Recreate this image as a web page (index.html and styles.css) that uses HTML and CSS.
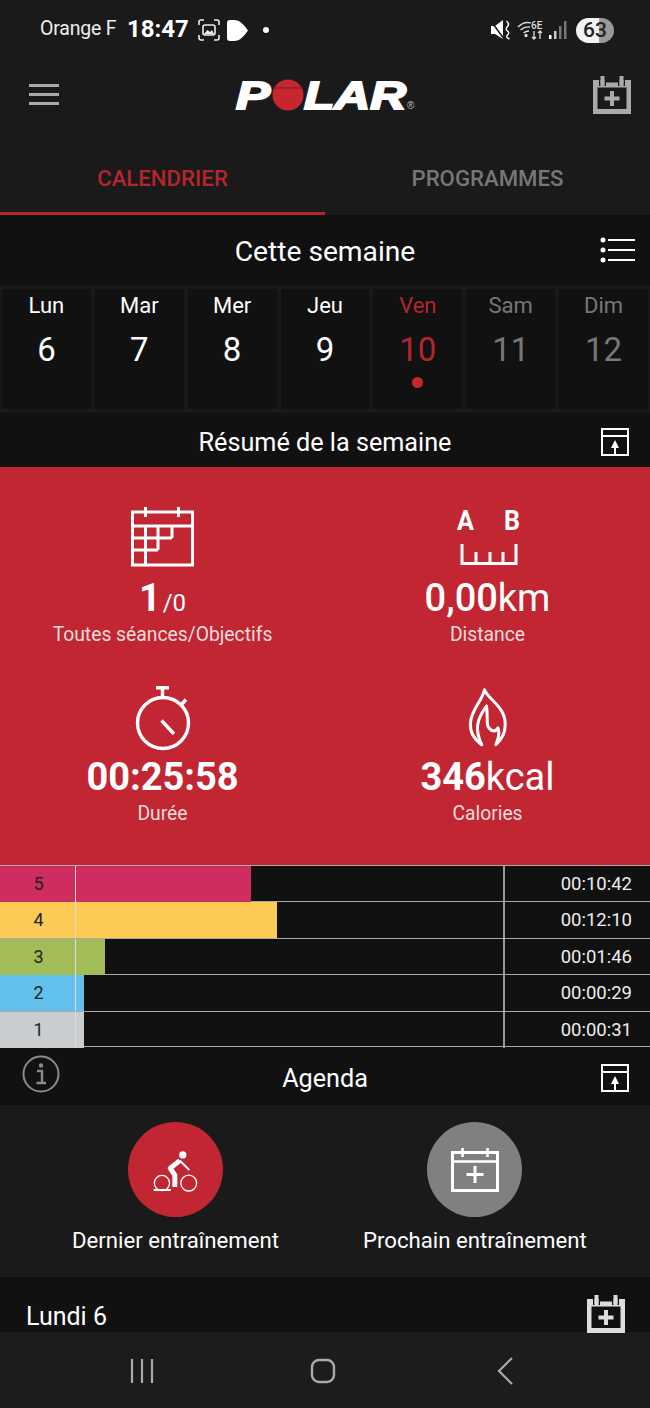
FILE: index.html
```html
<!DOCTYPE html>
<html lang="fr">
<head>
    <meta charset="UTF-8">
    <title>Polar - Calendrier</title>
    <link rel="stylesheet" href="styles.css">
</head>
<body>
<svg class="defs" width="0" height="0">
    <symbol id="cal-plus" viewBox="0 0 38 38">
        <path fill-rule="evenodd" fill="currentColor" d="M0 4H38V38H0Z M4.500 11.500V33H33.500V11.500Z M6 4V10H7.500V4Z M11.500 4V10H13V4Z M13 4V6.500H25V4Z M25 4V10H26.500V4Z M30.500 4V10H32V4Z"/>
        <path d="M9.500 0V9M28.500 0V9" stroke="currentColor" stroke-width="4"/>
        <path d="M19 15V30M11.500 22.500H26.500" stroke="currentColor" stroke-width="4"/>
    </symbol>
    <symbol id="panel-up" viewBox="0 0 28 28">
        <rect x="1" y="1" width="26" height="26" fill="none" stroke="currentColor" stroke-width="2"/>
        <path d="M1 8H27" stroke="currentColor" stroke-width="2"/>
        <path d="M14 12L18 20H10Z" fill="currentColor"/>
        <path d="M14 19V27" stroke="currentColor" stroke-width="2"/>
    </symbol>
</svg>

<div class="status">
    <span class="carrier">Orange F</span>
    <span class="clock">18:47</span>
    <svg class="st-shot" width="22" height="22" viewBox="0 0 22 22" fill="none" stroke="#eee" stroke-width="1.6">
        <path d="M1 6V3Q1 1 3 1H6M16 1H19Q21 1 21 3V6M1 16V19Q1 21 3 21H6M16 21H19Q21 21 21 19V16"/>
        <rect x="5" y="6" width="12" height="10" rx="2"/>
        <path d="M6 15L9.5 11L12 13L14 11L16 15Z" fill="#eee" stroke="none"/>
    </svg>
    <svg class="st-play" width="23" height="23" viewBox="0 0 23 23">
        <path d="M4 1H8C14 1 18 6 22 11.500C18 17 14 22 8 22H4Q1 22 1 19V4Q1 1 4 1Z" fill="#fff"/>
    </svg>
    <span class="st-dot"></span>
    <div class="status-right">
        <svg width="20" height="20" viewBox="0 0 20 20">
            <path d="M0 6H4L12 0V19L4 14H0Z" fill="#fff"/>
            <path d="M0 1L13 19" stroke="#1a1a1a" stroke-width="1.500"/>
            <path d="M15.500 1Q19 4 16.500 6.500T16.500 11T16.500 15T18.500 19" fill="none" stroke="#fff" stroke-width="1.500"/>
        </svg>
        <svg width="26" height="20" viewBox="0 0 26 20" fill="none" stroke="#ddd" stroke-width="1.3">
            <path d="M1 7Q7 1 14 3M3.500 10Q8 6 13 7M6.500 13Q9 11 12 11"/>
            <circle cx="9" cy="15.500" r="1" fill="#ddd"/>
            <path d="M17 11V19M15 17L17 19L19 17M23 19V11M21 13L23 11L25 13"/>
            <text class="st-6e" x="14" y="9">6E</text>
        </svg>
        <svg width="18" height="20" viewBox="0 0 18 20">
            <rect x="0" y="15" width="2.500" height="4" fill="#fff"/>
            <rect x="5" y="11" width="2.500" height="8" fill="#ccc"/>
            <rect x="10" y="6" width="2.500" height="13" fill="#777"/>
            <rect x="15" y="1" width="2.500" height="18" fill="#777"/>
        </svg>
        <span class="battery">63</span>
    </div>
</div>

<div class="topbar">
    <svg class="burger" width="30" height="22" viewBox="0 0 30 22">
        <path d="M0 1.500H30M0 10.500H30M0 19.500H30" stroke="#aaa" stroke-width="3"/>
    </svg>
    <svg class="logo" width="182" height="32" viewBox="0 0 182 32">
        <text class="logo-txt" x="1" y="29" textLength="34" lengthAdjust="spacingAndGlyphs">P</text>
        <circle cx="53" cy="15" r="15.500" fill="#c8262f"/>
        <path d="M38 8H68" stroke="#7d1a20" stroke-width="1"/>
        <text class="logo-txt" x="69" y="29" textLength="102" lengthAdjust="spacingAndGlyphs">LAR</text>
        <text class="logo-r" x="172" y="29">®</text>
    </svg>
    <svg class="topbar-add"><use href="#cal-plus"/></svg>
</div>

<div class="tabs">
    <div class="tab tab-on">CALENDRIER</div>
    <div class="tab">PROGRAMMES</div>
</div>

<div class="weekhead">
    <span>Cette semaine</span>
    <svg class="list-ic" width="36" height="26" viewBox="0 0 36 26">
        <circle cx="3" cy="3" r="2.500" fill="#fff"/>
        <circle cx="3" cy="13" r="2.500" fill="#fff"/>
        <circle cx="3" cy="23" r="2.500" fill="#fff"/>
        <path d="M8 3H35M8 13H35M8 23H35" stroke="#fff" stroke-width="2"/>
    </svg>
</div>

<div class="week">
    <div class="day"><span class="dn">Lun</span><span class="dd">6</span></div>
    <div class="day"><span class="dn">Mar</span><span class="dd">7</span></div>
    <div class="day"><span class="dn">Mer</span><span class="dd">8</span></div>
    <div class="day"><span class="dn">Jeu</span><span class="dd">9</span></div>
    <div class="day today"><span class="dn">Ven</span><span class="dd">10</span><i class="mark"></i></div>
    <div class="day off"><span class="dn">Sam</span><span class="dd">11</span></div>
    <div class="day off"><span class="dn">Dim</span><span class="dd">12</span></div>
</div>

<div class="bar">
    <span></span>
    <span class="bar-title">Résumé de la semaine</span>
    <svg class="bar-ic"><use href="#panel-up"/></svg>
</div>

<div class="summary">
    <div class="stat">
        <div class="stat-ic">
            <svg width="64" height="60" viewBox="0 0 64 60" fill="none" stroke="#fff" stroke-width="3">
                <rect x="1.500" y="5" width="60" height="53"/>
                <path d="M1 19H62M1 31H41M1 43H27M14.500 19V58M27 19V43M41 19V31M14.500 0V10M47.500 0V10"/>
            </svg>
        </div>
        <div class="val"><b>1</b><small>/0</small></div>
        <div class="lbl">Toutes séances/Objectifs</div>
    </div>
    <div class="stat">
        <div class="stat-ic">
            <svg width="60" height="60" viewBox="0 0 60 60" fill="none" stroke="#fff" stroke-width="3">
                <text class="ab" x="-1" y="23" textLength="17" lengthAdjust="spacingAndGlyphs">A</text>
                <text class="ab" x="46" y="23" textLength="16" lengthAdjust="spacingAndGlyphs">B</text>
                <path d="M4 37V56.500H58V37M18 45V56M32 45V56M45 45V56"/>
            </svg>
        </div>
        <div class="val"><b class="med">0,00</b>km</div>
        <div class="lbl">Distance</div>
    </div>
    <div class="stat">
        <div class="stat-ic">
            <svg width="56" height="64" viewBox="0 0 56 64" fill="none" stroke="#fff" stroke-width="3.400">
                <circle cx="28" cy="37" r="25.500"/>
                <path d="M21 1.700H34M27.500 2V11M47 18L51 13.500M26.500 34.500L39 48"/>
            </svg>
        </div>
        <div class="val"><b>00:25:58</b></div>
        <div class="lbl">Durée</div>
    </div>
    <div class="stat">
        <div class="stat-ic">
            <svg width="42" height="62" viewBox="200 45 125 185" fill="none" stroke="#fff" stroke-width="9" stroke-linejoin="round">
                <path d="M252 56C262 85 314 105 314 160C314 185 303 205 286 220C295 200 298 185 292 170C285 185 270 180 262 165C258 150 262 130 258 105C240 130 222 160 236 200C238 208 240 214 244 220C222 205 208 185 210 155C213 115 245 90 252 56Z"/>
            </svg>
        </div>
        <div class="val"><b>346</b>kcal</div>
        <div class="lbl">Calories</div>
    </div>
</div>

<div class="zones">
    <div class="zone">
        <div class="zone-n z5">5</div>
        <div class="zone-track"><div class="zone-fill z5" style="width: 175px"></div></div>
        <div class="zone-t">00:10:42</div>
    </div>
    <div class="zone">
        <div class="zone-n z4">4</div>
        <div class="zone-track"><div class="zone-fill z4" style="width: 201px"></div></div>
        <div class="zone-t">00:12:10</div>
    </div>
    <div class="zone">
        <div class="zone-n z3">3</div>
        <div class="zone-track"><div class="zone-fill z3" style="width: 29px"></div></div>
        <div class="zone-t">00:01:46</div>
    </div>
    <div class="zone">
        <div class="zone-n z2">2</div>
        <div class="zone-track"><div class="zone-fill z2" style="width: 8px"></div></div>
        <div class="zone-t">00:00:29</div>
    </div>
    <div class="zone">
        <div class="zone-n z1">1</div>
        <div class="zone-track"><div class="zone-fill z1" style="width: 8px"></div></div>
        <div class="zone-t">00:00:31</div>
    </div>
</div>

<div class="bar bar-agenda">
    <svg class="info" width="38" height="38" viewBox="0 0 38 38" fill="none" stroke="#8a8a8a">
        <circle cx="19" cy="19" r="17.500" stroke-width="2"/>
        <circle cx="19" cy="10.500" r="2.200" fill="#8a8a8a" stroke="none"/>
        <path d="M15 16H20V27M14.500 28H24" stroke-width="2.400"/>
    </svg>
    <span class="bar-title">Agenda</span>
    <svg class="bar-ic"><use href="#panel-up"/></svg>
</div>

<div class="actions">
    <div class="action">
        <div class="round round-red">
            <svg width="48" height="43" viewBox="300 114 145 130" fill="none" stroke="#fff">
                <circle cx="396" cy="135" r="11" fill="#fff" stroke="none"/>
                <circle cx="333" cy="220" r="23" stroke-width="4"/>
                <circle cx="414" cy="220" r="24" stroke-width="4"/>
                <path d="M387 152L358 175L372 196V232" stroke-width="15" stroke-linejoin="round"/>
                <path d="M387 152L416 181" stroke-width="6"/>
                <path d="M308 241H360" stroke-width="6"/>
            </svg>
        </div>
        <div class="action-lbl">Dernier entraînement</div>
    </div>
    <div class="action">
        <div class="round round-grey">
            <svg width="48" height="44" viewBox="0 0 48 44" fill="none" stroke="#fff">
                <rect x="1.500" y="4.500" width="45" height="38" stroke-width="3"/>
                <path d="M1 13.500H47" stroke-width="2.600"/>
                <path d="M11.500 0V9M36.500 0V9" stroke-width="2.600"/>
                <path d="M24 18V35M15.500 26.500H32.500" stroke-width="3"/>
            </svg>
        </div>
        <div class="action-lbl">Prochain entraînement</div>
    </div>
</div>

<div class="dayrow">
    <span class="dayrow-txt">Lundi 6</span>
    <svg class="dayrow-add"><use href="#cal-plus"/></svg>
</div>

<div class="nav">
    <svg width="24" height="24" viewBox="0 0 24 24"><path d="M2 0V24M12 0V24M22 0V24" stroke="#aaa" stroke-width="2.200"/></svg>
    <svg width="26" height="26" viewBox="0 0 26 26"><rect x="2" y="2" width="22" height="22" rx="7" fill="none" stroke="#aaa" stroke-width="2.400"/></svg>
    <svg class="nav-back" width="18" height="28" viewBox="0 0 18 28"><path d="M16 1L3 14L16 27" fill="none" stroke="#aaa" stroke-width="2.200"/></svg>
</div>
</body>
</html>
```

FILE: styles.css
```css
* {
    box-sizing: border-box;
}
body {
    margin: 0;
    width: 650px;
    height: 1408px;
    overflow: hidden;
    background: #1a1a1a;
    color: #fff;
    font-family: Roboto, "Liberation Sans", sans-serif;
}
svg {
    display: block;
    overflow: visible;
}
.defs {
    position: absolute;
}

/* status bar */
.status {
    height: 60px;
    display: flex;
    align-items: center;
    padding-left: 40px;
}
.carrier {
    font-size: 19.500px;
    letter-spacing: -0.2px;
    color: #eee;
    width: 87px;
    margin-top: -3px;
}
.clock {
    font-size: 24px;
    font-weight: 700;
    width: 71px;
    margin-top: -2px;
}
.st-play {
    margin-left: 6px;
}
.st-dot {
    width: 6px;
    height: 6px;
    border-radius: 50%;
    background: #fff;
    margin-left: 14px;
}
.status-right {
    margin-left: auto;
    padding-right: 36px;
    display: flex;
    align-items: center;
    gap: 6px;
}
.st-6e {
    font-size: 10px;
    font-weight: 500;
    fill: #ddd;
    stroke: none;
}
.battery {
    width: 38px;
    height: 25px;
    margin-left: 3px;
    border-radius: 13px;
    background: linear-gradient(90deg, #f2f2f2 0%, #f2f2f2 60%, #999 62%, #999 100%);
    color: #222;
    font-size: 21px;
    font-weight: 500;
    line-height: 25px;
    text-align: center;
}

/* header */
.topbar {
    height: 70px;
    display: flex;
    align-items: center;
    padding: 0 19px 0 29px;
}
.burger {
    width: 30px;
}
.logo {
    margin-left: 176px;
    margin-top: 1px;
}
.logo-txt {
    font-family: "Liberation Sans", sans-serif;
    font-size: 39px;
    font-weight: 700;
    font-style: italic;
    fill: #fff;
    stroke: #fff;
    stroke-width: 2px;
}
.logo-r {
    font-family: "Liberation Sans", sans-serif;
    font-size: 10px;
    fill: #bbb;
}
.topbar-add {
    width: 38px;
    height: 38px;
    margin-left: auto;
    margin-right: 0;
    color: #aaa;
}

/* tabs */
.tabs {
    height: 85px;
    display: flex;
}
.tab {
    width: 325px;
    text-align: center;
    padding-top: 35px;
    font-size: 22.200px;
    font-weight: 500;
    color: #777;
}
.tab-on {
    color: #b3262f;
    border-bottom: 3px solid #b3262f;
}

/* week */
.weekhead {
    height: 70px;
    background: #111;
    display: flex;
    align-items: center;
    justify-content: center;
    padding-top: 2px;
    font-size: 28.200px;
    position: relative;
}
.list-ic {
    position: absolute;
    right: 14px;
    top: 22px;
}
.week {
    height: 128px;
    display: grid;
    grid-template-columns: repeat(7, 1fr);
    padding: 2px 0;
    background: #191919;
}
.day {
    margin: 2px;
    background: #111;
    display: flex;
    flex-direction: column;
    align-items: center;
}
.dn {
    margin-top: 3px;
    font-size: 22px;
    line-height: 28px;
}
.dd {
    margin-top: 7px;
    font-size: 33px;
    line-height: 46px;
}
.today {
    color: #b3262f;
}
.off {
    color: #777;
}
.mark {
    width: 11px;
    height: 11px;
    margin-top: 4px;
    border-radius: 50%;
    background: #c8262f;
}

/* title bars */
.bar {
    height: 54px;
    background: #111;
    display: grid;
    grid-template-columns: 1fr auto 1fr;
    align-items: center;
    padding: 4px 21px 0;
}
.bar-title {
    font-size: 25.200px;
}
.bar-ic {
    width: 28px;
    height: 28px;
    justify-self: end;
    color: #fff;
}
.bar-agenda {
    height: 58px;
}
.info {
    margin: -9px 0 0 1px;
}

/* weekly summary */
.summary {
    height: 398px;
    background: #c12632;
    display: grid;
    grid-template-columns: 1fr 1fr;
    grid-auto-rows: 140px;
    row-gap: 39px;
    padding-top: 40px;
}
.stat {
    display: flex;
    flex-direction: column;
    align-items: center;
}
.stat-ic {
    height: 70px;
}
.stat:nth-child(n+3) .stat-ic {
    height: 71px;
}
.val {
    height: 46px;
    margin-top: -1px;
    font-size: 38px;
    line-height: 46px;
}
.val b {
    font-weight: 700;
}
.val b.med {
    font-weight: 500;
}
.val small {
    font-size: 24px;
    margin-left: 2px;
}
.lbl {
    margin-top: 2px;
    font-size: 19.300px;
    line-height: 24px;
    color: #f6dcdd;
}
.ab {
    font-family: Roboto, sans-serif;
    font-size: 28px;
    font-weight: 700;
    fill: #fff;
    stroke: none;
}

/* heart rate zones */
.zones {
    height: 182px;
    background: #111;
}
.zone {
    height: 36.400px;
    display: grid;
    grid-template-columns: 76px 427px 1fr;
    border-top: 1px solid #aaa;
}
.zone:last-child {
    border-bottom: 1px solid #aaa;
}
.zone-n {
    color: #222;
    font-size: 18px;
    line-height: 35px;
    text-align: center;
    padding-left: 2px;
    border-right: 1px solid #ddd;
}
.zone-fill {
    height: 100%;
}
.zone-t {
    border-left: 2px solid #999;
    font-size: 18.500px;
    line-height: 36px;
    text-align: right;
    padding-right: 18px;
    color: #eee;
}
.z5 { background: #cf2c5f; }
.z4 { background: #fdca55; }
.z3 { background: #a2bc57; }
.z2 { background: #63bfeb; }
.z1 { background: #c9cdd0; }

/* last / next training */
.actions {
    height: 172px;
    display: flex;
    gap: 84px;
    padding: 17px 0 0 72px;
}
.action {
    display: flex;
    flex-direction: column;
    align-items: center;
}
.round {
    width: 95px;
    height: 95px;
    border-radius: 50%;
    display: flex;
    align-items: center;
    justify-content: center;
}
.round-red {
    background: #c12632;
}
.round-grey {
    background: #808080;
}
.action-lbl {
    margin-top: 9px;
    font-size: 22.200px;
    line-height: 28px;
}

.dayrow {
    height: 55px;
    background: #111;
    display: flex;
    align-items: center;
    justify-content: space-between;
    padding: 0 25px 0 26px;
    font-size: 25px;
}
.dayrow-txt {
    margin-top: 24px;
}
.dayrow-add {
    width: 38px;
    height: 38px;
    color: #ddd;
    margin-top: 18px;
}

/* android nav */
.nav {
    height: 76px;
    background: #1c1c1c;
    display: flex;
    align-items: center;
    padding: 1px 0 0 130px;
    gap: 156px;
}
.nav-back {
    margin-left: 4px;
}
```
